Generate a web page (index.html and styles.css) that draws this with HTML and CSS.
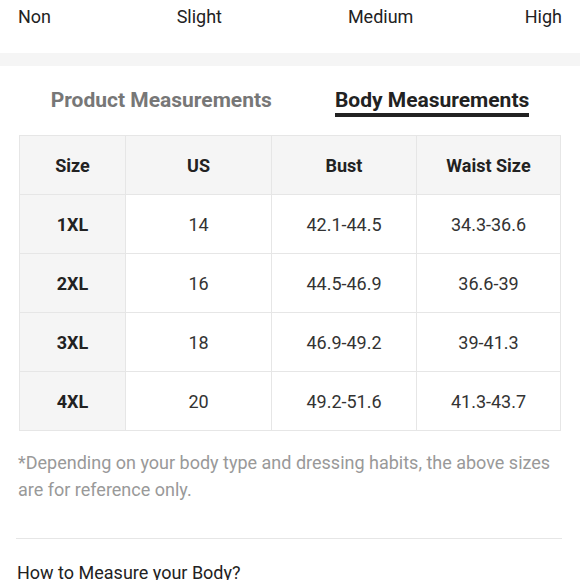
FILE: index.html
```html
<!DOCTYPE html>
<html>
<head>
<meta charset="utf-8">
<link rel="stylesheet" href="styles.css">
</head>
<body>
<div class="scale">
  <span class="lbl l-non">Non</span>
  <span class="lbl l-slight">Slight</span>
  <span class="lbl l-medium">Medium</span>
  <span class="lbl l-high">High</span>
</div>
<div class="band"></div>
<div class="tabs">
  <div class="tab">Product Measurements</div>
  <div class="tab active">Body Measurements</div>
</div>
<div class="wrap">
  <table class="size-table">
    <thead>
      <tr><th>Size</th><th>US</th><th>Bust</th><th>Waist Size</th></tr>
    </thead>
    <tbody>
      <tr><th>1XL</th><td>14</td><td>42.1-44.5</td><td>34.3-36.6</td></tr>
      <tr><th>2XL</th><td>16</td><td>44.5-46.9</td><td>36.6-39</td></tr>
      <tr><th>3XL</th><td>18</td><td>46.9-49.2</td><td>39-41.3</td></tr>
      <tr><th>4XL</th><td>20</td><td>49.2-51.6</td><td>41.3-43.7</td></tr>
    </tbody>
  </table>
  <p class="note">*Depending on your body type and dressing habits, the above sizes are for reference only.</p>
</div>
<div class="rule"></div>
<div class="how">How to Measure your Body?</div>
</body>
</html>
```

FILE: styles.css
```css
* { box-sizing: border-box; }
html, body { margin: 0; padding: 0; background: #fff; }
body {
  font-family: Roboto, "Liberation Sans", sans-serif;
  color: #222;
  width: 580px;
  overflow: hidden;
}
.scale {
  height: 53px;
  padding: 6px 18px 0;
  display: grid;
  grid-template-columns: repeat(6, minmax(0, 1fr));
  font-size: 18px;
  line-height: 21px;
  color: #222;
}
.lbl { white-space: nowrap; }
.l-non { grid-column: 1; justify-self: start; }
.l-slight { grid-column: 2 / 4; justify-self: center; }
.l-medium { grid-column: 4 / 6; justify-self: center; }
.l-high { grid-column: 6; justify-self: end; }
.band { height: 13px; background: #f5f5f5; }
.tabs {
  display: flex;
  justify-content: center;
  gap: 63px;
  padding-top: 22px;
}
.tab {
  font-size: 21px;
  line-height: 24px;
  font-weight: 700;
  color: #777;
  padding-bottom: 5px;
}
.tab.active {
  color: #222;
  border-bottom: 4px solid #222;
  padding-bottom: 1px;
}
.wrap { padding: 18px 19px 0; }
.size-table {
  width: 542px;
  border-collapse: collapse;
  table-layout: fixed;
}
.size-table th, .size-table td {
  border: 1px solid #e6e6e6;
  height: 59px;
  text-align: center;
  padding: 0;
  font-size: 18px;
}
.size-table th { font-weight: 700; background: #f5f5f5; color: #222; }
.size-table td { font-weight: 400; color: #333; }
.size-table th:nth-child(1), .size-table td:nth-child(1) { width: 106px; }
.size-table th:nth-child(2), .size-table td:nth-child(2) { width: 146px; }
.size-table th:nth-child(3), .size-table td:nth-child(3) { width: 145px; }
.note {
  margin: 18px 0 0;
  margin-left: -1px;
  font-size: 18px;
  line-height: 27px;
  color: #999;
}
.rule {
  margin: 35px 18px 0 16px;
  height: 1px;
  background: #e6e6e6;
}
.how {
  margin-top: 23px;
  padding-left: 17px;
  font-size: 18px;
  line-height: 22px;
  color: #222;
}
```
